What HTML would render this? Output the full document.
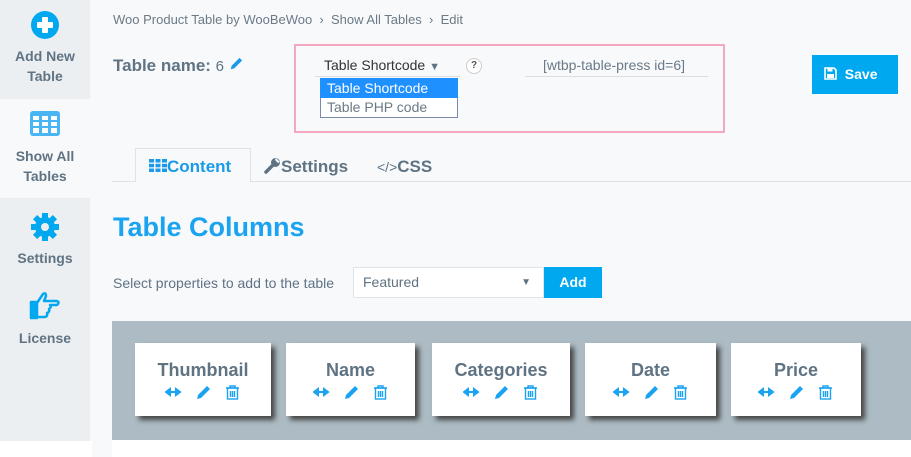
<!DOCTYPE html>
<html><head><meta charset="utf-8"><style>
*{box-sizing:border-box;margin:0;padding:0}
body{width:911px;height:457px;overflow:hidden;background:#f8f9fb;font-family:"Liberation Sans",Arial,sans-serif;position:relative;color:#5f7383}
.abs{position:absolute}
.side{left:0;top:0;width:90px;height:441px;background:#eceff2}
.item{position:absolute;left:0;width:90px;text-align:center;font-weight:bold;font-size:14px;color:#5f7383;line-height:20px}
.card{position:absolute;top:343px;height:73px;background:#fff;box-shadow:4px 4px 5px #444;text-align:center}
.card h3{font-size:18px;color:#5f7383;margin-top:17px;line-height:20px}
.icons{margin-top:5px;display:flex;justify-content:center;gap:15px}
</style></head><body>
<svg width="0" height="0" style="position:absolute"><defs>
<g id="ic">
<path d="M1 7h14M1 7l4-3v6zM15 7l-4-3v6z" fill="#1aa3f0" stroke="#1aa3f0" stroke-width="2"/>
<g transform="translate(30 0)"><path d="M2 14 L3 10 L12 1 L15 4 L6 13z" fill="#1aa3f0"/></g>
<g transform="translate(60 0)" fill="none" stroke="#1aa3f0" stroke-width="1.4"><path d="M1 3h13M5 3V1h5v2"/><rect x="2.5" y="3" width="10" height="11"/><path d="M5.5 6v6M7.5 6v6M9.5 6v6"/></g>
</g></defs></svg>
<div class="abs side"></div>
<div class="abs" style="left:0;top:99px;width:90px;height:99px;background:#f8f9fb"></div>
<div class="abs" style="left:0;top:441px;width:92px;height:16px;background:#fff"></div>
<div class="abs" style="left:112px;top:440px;width:799px;height:17px;background:#fff"></div>

<div class="item" style="top:10px">
<svg width="30" height="30" viewBox="0 0 30 30" style="display:block;margin:0 auto"><circle cx="15" cy="15" r="14" fill="#00a8f0"/><rect x="12" y="7" width="6" height="16" rx="1" fill="#fff"/><rect x="7" y="12" width="16" height="6" rx="1" fill="#fff"/></svg>
<div style="margin-top:6px">Add New<br>Table</div></div>
<div class="item" style="top:111px">
<svg width="30" height="25" viewBox="0 0 30 25" style="display:block;margin:0 auto"><rect x="0" y="0" width="30" height="25" rx="3" fill="#4ab5f3"/><g fill="#fff"><rect x="3" y="5" width="6" height="4"/><rect x="12" y="5" width="6" height="4"/><rect x="21" y="5" width="6" height="4"/><rect x="3" y="11" width="6" height="4"/><rect x="12" y="11" width="6" height="4"/><rect x="21" y="11" width="6" height="4"/><rect x="3" y="17" width="6" height="5"/><rect x="12" y="17" width="6" height="5"/><rect x="21" y="17" width="6" height="5"/></g></svg>
<div style="margin-top:10px">Show All<br>Tables</div></div>
<div class="item" style="top:212px">
<svg width="30" height="30" viewBox="0 0 30 30" style="display:block;margin:0 auto"><g fill="#00a8f0"><circle cx="15" cy="15" r="10"/><g transform="translate(15 15)"><rect x="-3" y="-14" width="6" height="28"/><rect x="-3" y="-14" width="6" height="28" transform="rotate(45)"/><rect x="-3" y="-14" width="6" height="28" transform="rotate(90)"/><rect x="-3" y="-14" width="6" height="28" transform="rotate(135)"/></g></g><circle cx="15" cy="15" r="4" fill="#eceff2"/></svg>
<div style="margin-top:6px">Settings</div></div>
<div class="item" style="top:290px">
<svg width="34" height="30" viewBox="0 0 34 30" style="display:block;margin:0 auto"><path d="M3 12h6v16H3z M9 13 L15 4 Q18 2 18 6 L16 11 H29 Q32 12 29 15 H22 Q24 17 21 19 Q22 22 19 23 Q20 27 16 27 H9z" fill="none" stroke="#00a8f0" stroke-width="2.5" stroke-linejoin="round"/><rect x="3" y="12" width="6" height="16" fill="#00a8f0"/></svg>
<div style="margin-top:8px">License</div></div>

<div class="abs" style="left:113px;top:12px;font-size:13px;color:#6a7a87">Woo Product Table by WooBeWoo &nbsp;›&nbsp; Show All Tables &nbsp;›&nbsp; Edit</div>
<div class="abs" style="left:113px;top:56px;font-size:17px;font-weight:bold;color:#5f7383">Table name: <span style="font-weight:normal;font-size:15px">6</span> <svg width="14" height="14" viewBox="0 0 16 16"><path d="M2 14 L3 10 L12 1 L15 4 L6 13z" fill="#1a9ae8"/></svg></div>

<div class="abs" style="left:294px;top:44px;width:431px;height:89px;border:2px solid #f5a8c0"></div>
<div class="abs" style="left:324px;top:57px;font-size:14px;color:#333">Table Shortcode <span style="color:#5f7383;font-size:11px">▼</span></div>
<div class="abs" style="left:315px;top:76px;width:145px;border-top:1px solid #ddd"></div>
<div class="abs" style="left:466px;top:58px;width:16px;height:16px;border:1px solid #ccc;border-radius:50%;font-size:10px;font-weight:bold;text-align:center;line-height:14px;color:#555;background:#fff">?</div>
<div class="abs" style="left:320px;top:78px;width:138px;height:40px;border:1px solid #7a8aa8;border-top:none;background:#fff"></div>
<div class="abs" style="left:320px;top:78px;width:138px;height:20px;background:#1e90ff;color:#fff;font-size:14px;padding-left:7px;line-height:20px">Table Shortcode</div>
<div class="abs" style="left:327px;top:98px;font-size:14px;color:#6a7a87;line-height:18px">Table PHP code</div>
<div class="abs" style="left:543px;top:57px;font-size:14px;color:#6a7a87">[wtbp-table-press id=6]</div>
<div class="abs" style="left:525px;top:76px;width:183px;border-top:1px solid #ddd"></div>
<div class="abs" style="left:812px;top:55px;width:86px;height:39px;background:#00a8f0;color:#fff;font-weight:bold;font-size:14px;line-height:39px;padding-left:12px"><svg width="13" height="13" viewBox="0 0 13 13" style="vertical-align:-1px"><path d="M1 1h9l2 2v9H1z" fill="none" stroke="#fff" stroke-width="1.6"/><rect x="3.5" y="1" width="5" height="3.5" fill="#fff"/><rect x="3" y="7" width="7" height="4" fill="#fff"/></svg>&nbsp; Save</div>

<div class="abs" style="left:112px;top:181px;width:799px;border-top:1px solid #dde3e8"></div>
<div class="abs" style="left:135px;top:148px;width:116px;height:34px;border:1px solid #dde3e8;border-bottom:none;background:#f8f9fb"></div>
<div class="abs" style="left:149px;top:157px;font-size:17px;font-weight:bold;color:#1a9ae8"><svg width="18" height="13" viewBox="0 0 18 13" style="vertical-align:0"><g fill="#1a9ae8"><rect x="0" y="0" width="5" height="3.5"/><rect x="6.5" y="0" width="5" height="3.5"/><rect x="13" y="0" width="5" height="3.5"/><rect x="0" y="4.8" width="5" height="3.5"/><rect x="6.5" y="4.8" width="5" height="3.5"/><rect x="13" y="4.8" width="5" height="3.5"/><rect x="0" y="9.5" width="5" height="3.5"/><rect x="6.5" y="9.5" width="5" height="3.5"/><rect x="13" y="9.5" width="5" height="3.5"/></g></svg>Content</div>
<div class="abs" style="left:264px;top:157px;font-size:17px;font-weight:bold;color:#5f7383"><svg width="17" height="17" viewBox="0 0 17 17" style="vertical-align:-2px"><path d="M2 15 L9 8" stroke="#5f7383" stroke-width="3.5" stroke-linecap="round"/><circle cx="11.5" cy="5.5" r="4.5" fill="#5f7383"/><path d="M12 1 L16 5 L14 6 L11 3z" fill="#f8f9fb"/></svg>Settings</div>
<div class="abs" style="left:377px;top:157px;font-size:17px;font-weight:bold;color:#5f7383"><span style="font-weight:normal;font-size:14px">&lt;/&gt;</span>CSS</div>

<div class="abs" style="left:113px;top:212px;font-size:27px;font-weight:bold;color:#1aa3f0">Table Columns</div>
<div class="abs" style="left:113px;top:275px;font-size:14px;color:#5f7383">Select properties to add to the table</div>
<div class="abs" style="left:353px;top:267px;width:191px;height:31px;border:1px solid #e0e4e8;background:#fff;font-size:14px;line-height:29px;padding-left:9px;color:#5f7383">Featured<span style="position:absolute;right:12px;font-size:10px">▼</span></div>
<div class="abs" style="left:544px;top:267px;width:58px;height:31px;background:#00a8f0;color:#fff;font-weight:bold;font-size:14px;text-align:center;line-height:30px">Add</div>

<div class="abs" style="left:112px;top:321px;width:799px;height:119px;background:#adbcc4"></div>
<div class="card" style="left:135px;width:136px"><h3>Thumbnail</h3><div class="icons"><svg width="76" height="15"><use href="#ic"/></svg></div></div>
<div class="card" style="left:286px;width:129px"><h3>Name</h3><div class="icons"><svg width="76" height="15"><use href="#ic"/></svg></div></div>
<div class="card" style="left:432px;width:138px"><h3>Categories</h3><div class="icons"><svg width="76" height="15"><use href="#ic"/></svg></div></div>
<div class="card" style="left:585px;width:131px"><h3>Date</h3><div class="icons"><svg width="76" height="15"><use href="#ic"/></svg></div></div>
<div class="card" style="left:731px;width:130px"><h3>Price</h3><div class="icons"><svg width="76" height="15"><use href="#ic"/></svg></div></div>
</body></html>
